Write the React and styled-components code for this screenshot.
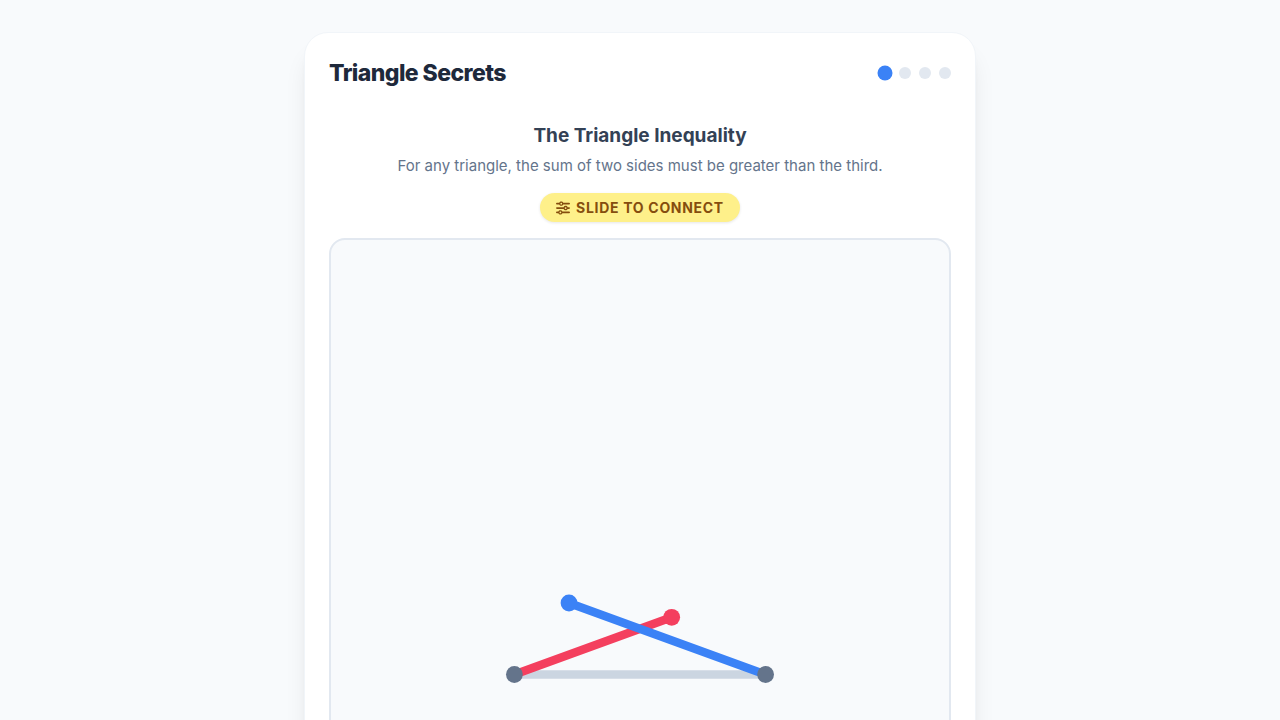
import React from "react";
import styled, { createGlobalStyle } from "styled-components";
import { FaSliders } from "react-icons/fa6";

const GlobalStyle = createGlobalStyle`
  *, *::before, *::after { box-sizing: border-box; }
  body {
    margin: 0;
    background: #f8fafc;
    color: #1e293b;
    font-family: Inter, "Liberation Sans", sans-serif;
  }
  h1, h2, p { margin: 0; }
`;

const Page = styled.main`
  min-height: 100vh;
  padding: 32px 16px;
  display: flex;
  justify-content: center;
  align-items: flex-start;
`;

const Card = styled.section`
  width: 100%;
  max-width: 672px;
  padding: 24px;
  background: #fff;
  border: 1px solid #f1f5f9;
  border-radius: 24px;
  box-shadow: 0 20px 25px -5px rgba(0, 0, 0, 0.1),
    0 8px 10px -6px rgba(0, 0, 0, 0.1);
`;

const Header = styled.header`
  display: flex;
  align-items: center;
  justify-content: space-between;
  margin-bottom: 32px;
`;

const Title = styled.h1`
  font-size: 23px;
  line-height: 32px;
  font-weight: 800;
  letter-spacing: -0.025em;
`;

const Steps = styled.div`
  display: flex;
  gap: 8px;
`;

const Step = styled.span`
  width: 12px;
  height: 12px;
  border-radius: 50%;
  background: ${(p) => (p.$active ? "#3b82f6" : "#e2e8f0")};
  transform: ${(p) => (p.$active ? "scale(1.25)" : "none")};
`;

const Intro = styled.div`
  display: flex;
  flex-direction: column;
  align-items: center;
  text-align: center;
  margin-bottom: 16px;
`;

const Heading = styled.h2`
  font-size: 19px;
  line-height: 30px;
  font-weight: 700;
  color: #334155;
  margin-bottom: 2px;
`;

const Lead = styled.p`
  font-size: 15px;
  line-height: 26px;
  color: #64748b;
  margin-bottom: 14px;
`;

const Hint = styled.div`
  display: inline-flex;
  align-items: center;
  gap: 6px;
  padding: 4px 16px;
  border-radius: 999px;
  background: #fef08a;
  color: #854d0e;
  font-size: 14px;
  line-height: 21px;
  font-weight: 700;
  letter-spacing: 0.05em;
  text-transform: uppercase;
  box-shadow: 0 1px 3px rgba(0, 0, 0, 0.1);
`;

const Board = styled.div`
  background: #f8fafc;
  border: 2px solid #e2e8f0;
  border-radius: 16px;
  overflow: hidden;
`;

const Drawing = styled.svg`
  display: block;
  width: 100%;
  height: auto;
`;

const STEPS = ["Inequality", "Angles", "Area", "Summary"];

export default function App() {
  return (
    <>
      <GlobalStyle />
      <Page>
        <Card>
          <Header>
            <Title>Triangle Secrets</Title>
            <Steps>
              {STEPS.map((s, i) => (
                <Step key={s} $active={i === 0} />
              ))}
            </Steps>
          </Header>
          <Intro>
            <Heading>The Triangle Inequality</Heading>
            <Lead>
              For any triangle, the sum of two sides must be greater than the
              third.
            </Lead>
            <Hint>
              <FaSliders aria-hidden="true" />
              <span>Slide to connect</span>
            </Hint>
          </Intro>
          <Board>
            <Drawing viewBox="0 0 618 516" aria-hidden="true">
              <g strokeWidth="8.4" strokeLinecap="round">
                <line x1="183.4" y1="434.5" x2="434.6" y2="434.5" stroke="#cbd5e1" />
                <line x1="183.4" y1="434.5" x2="340.7" y2="377.3" stroke="#f43f5e" />
                <line x1="434.6" y1="434.5" x2="238" y2="363" stroke="#3b82f6" />
              </g>
              <circle cx="183.4" cy="434.5" r="8.4" fill="#64748b" />
              <circle cx="434.6" cy="434.5" r="8.4" fill="#64748b" />
              <circle cx="340.7" cy="377.3" r="8.4" fill="#f43f5e" />
              <circle cx="238" cy="363" r="8.4" fill="#3b82f6" />
            </Drawing>
          </Board>
        </Card>
      </Page>
    </>
  );
}
